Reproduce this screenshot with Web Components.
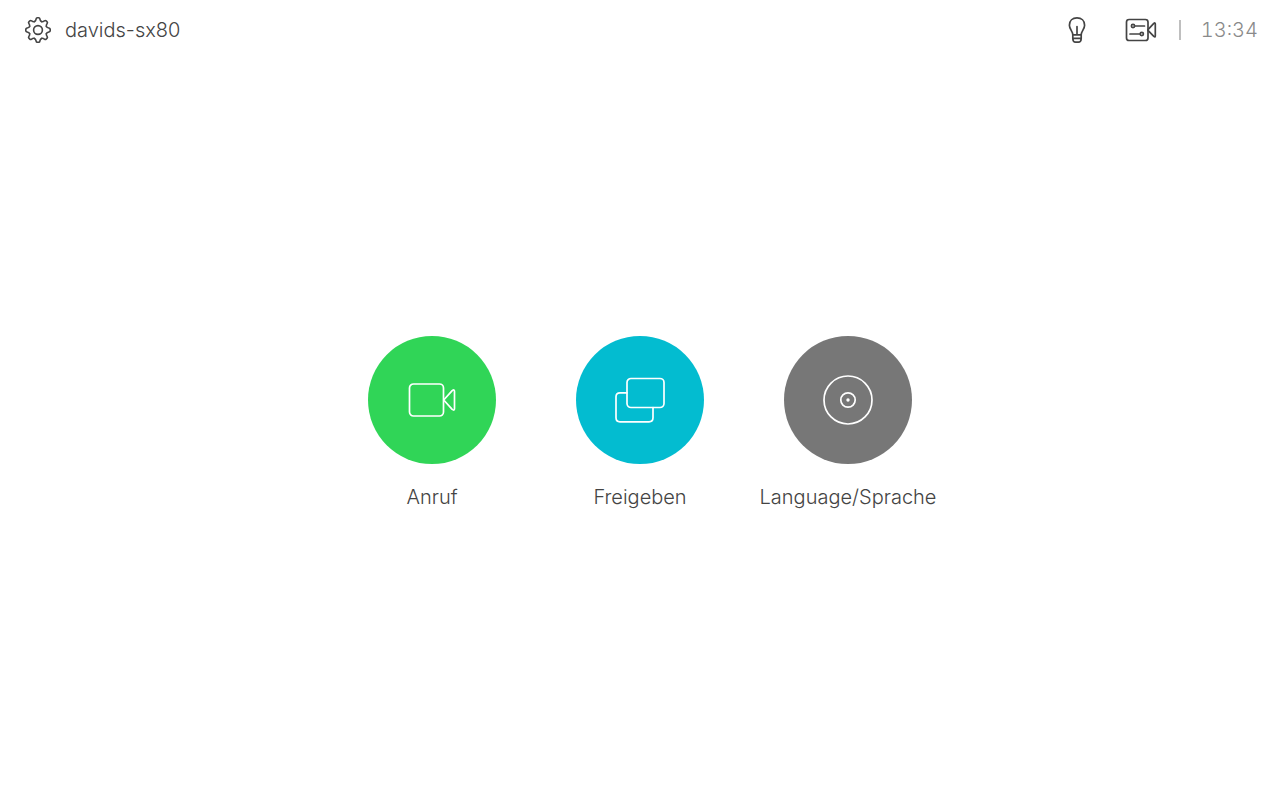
<!DOCTYPE html>
<html lang="de">
<head>
<meta charset="utf-8">
<meta name="viewport" content="width=device-width, initial-scale=1">
<title>davids-sx80</title>
<style>
html, body { margin: 0; height: 100%; }
body { background: #fff; color: #444; font: 300 20px/24px Inter, "Liberation Sans", sans-serif; }
</style>
</head>
<body>
<touch-panel>
  <status-bar slot="top" name="davids-sx80" time="13:34"></status-bar>
  <action-tile color="#30d557" icon="call">Anruf</action-tile>
  <action-tile color="#03bcd0" icon="share">Freigeben</action-tile>
  <action-tile color="#777777" icon="disc">Language/Sprache</action-tile>
</touch-panel>
<script>
const tooth = '<path d="M-3.5 -8.4C-2.2 -9 -2.1 -9.8 -1.9 -11Q-1.7 -12.2 -.7 -12.2H.7Q1.7 -12.2 1.9 -11C2.1 -9.8 2.2 -9 3.5 -8.4"';
const gear = Array.from({ length: 8 }, (_, i) => `${tooth} transform="rotate(${i * 45})"/>`).join('');
const icons = {
  gear: `<svg width="28" height="28" viewBox="-14 -14 28 28" stroke-width="1.6">${gear}<circle r="4.4"/></svg>`,
  bulb: `<svg width="20" height="28" viewBox="0 0 20 28" stroke-width="1.7">
    <path d="M5.8 18.8C5.8 15.2 2.4 13.4 2.4 9.2C2.4 4.7 5.6 1.9 10 1.9S17.6 4.7 17.6 9.2C17.6 13.4 14.2 15.2 14.2 18.8V22.6Q14.2 26.2 11.4 26.2H8.6Q5.8 26.2 5.8 22.6ZM5.8 18.8H14.2M5.8 22.4H14.2M10 10.6V18.8"/></svg>`,
  camera: `<svg width="32" height="24" viewBox="0 0 32 24" stroke-width="1.7">
    <rect x="1.5" y="1.5" width="21.5" height="21" rx="2.6"/>
    <path d="M23 11.6L28.8 5.4Q30.3 4.2 30.3 6V18Q30.3 19.6 28.8 18.4L23 12.4M9.6 8H19.5M5 16H15"/>
    <circle cx="8" cy="8" r="1.6"/><circle cx="16.8" cy="16" r="1.6"/></svg>`,
  call: `<svg width="50" height="36" viewBox="0 0 50 36" stroke-width="1.7">
    <rect x="2.5" y="2" width="34" height="32" rx="4"/>
    <path d="M36.7 18L45.2 8.6Q47.5 7 47.5 9.4V26.6Q47.5 29 45.2 27.4Z"/></svg>`,
  share: `<svg width="52" height="48" viewBox="0 0 52 48" stroke-width="1.7">
    <rect x="13" y="2.5" width="37" height="29" rx="4"/>
    <path d="M13 16.8H6Q2 16.8 2 20.8V41.8Q2 45.8 6 45.8H35Q39 45.8 39 41.8V31.5"/></svg>`,
  disc: `<svg width="52" height="52" viewBox="-26 -26 52 52" stroke-width="1.7">
    <circle r="24"/><circle r="7.2"/><circle r="1.7" fill="currentColor" stroke="none"/></svg>`
};
const common = `<style>
  svg { display: block; fill: none; stroke: currentColor; stroke-linecap: round; stroke-linejoin: round; }
  button { margin: 0; padding: 0; border: 0; background: none; font: inherit; color: inherit; cursor: pointer; }
</style>`;

customElements.define('touch-panel', class extends HTMLElement {
  constructor() {
    super();
    this.attachShadow({ mode: 'open' }).innerHTML = `<style>
      :host { display: grid; grid-template-rows: 60px 1fr 60px; min-height: 100%; }
      main { display: flex; flex-wrap: wrap; align-items: center; justify-content: center; gap: 80px; padding-top: 45px; }
    </style><slot name="top"></slot><main><slot></slot></main>`;
  }
});

customElements.define('status-bar', class extends HTMLElement {
  connectedCallback() {
    this.attachShadow({ mode: 'open' }).innerHTML = `${common}<style>
      :host { display: block; }
      header { display: flex; align-items: center; justify-content: space-between; height: 60px; padding: 0 22px 0 24px; }
      .device, .tools, .controls { display: flex; align-items: center; }
      .device { gap: 13px; }
      .controls { gap: 38px; }
      .tools { gap: 22px; }
      .clock { color: #8a8a8a; border-left: 2px solid #bfbfbf; padding-left: 20px; line-height: 20px; font-variant-numeric: tabular-nums; }
    </style>
    <header>
      <button class="device">${icons.gear}<span>${this.getAttribute('name')}</span></button>
      <div class="tools">
        <div class="controls">
          <button aria-label="Licht">${icons.bulb}</button>
          <button aria-label="Kamera">${icons.camera}</button>
        </div>
        <time class="clock">${this.getAttribute('time')}</time>
      </div>
    </header>`;
  }
});

customElements.define('action-tile', class extends HTMLElement {
  connectedCallback() {
    this.attachShadow({ mode: 'open' }).innerHTML = `${common}<style>
      :host { display: block; width: 128px; }
      button { display: flex; flex-direction: column; align-items: center; gap: 21px; width: 100%; }
      .disc { display: grid; place-items: center; width: 128px; height: 128px; border-radius: 50%; color: #fff; background: ${this.getAttribute('color')}; }
      .label { white-space: nowrap; }
    </style>
    <button><span class="disc">${icons[this.getAttribute('icon')]}</span><span class="label"><slot></slot></span></button>`;
  }
});
</script>
</body>
</html>
